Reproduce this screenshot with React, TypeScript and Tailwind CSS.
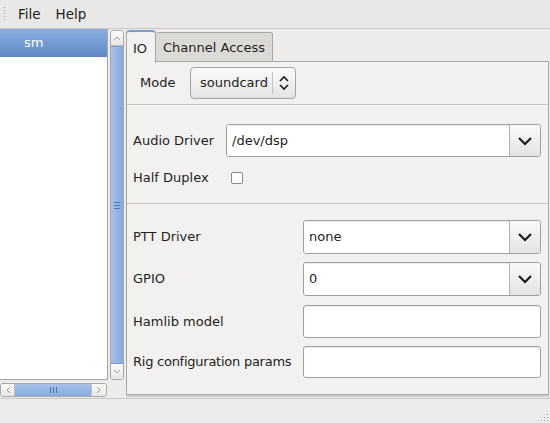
import React from "react";

function ChevronDown() {
  return (
    <svg width="16" height="10" viewBox="0 0 16 10">
      <path d="M2 2 L8 8 L14 2" fill="none" stroke="#1a1a1a" strokeWidth="2.2" />
    </svg>
  );
}

function UpDown() {
  return (
    <svg width="12" height="18" viewBox="0 0 12 18">
      <path d="M2 7 L6 3 L10 7" fill="none" stroke="#1a1a1a" strokeWidth="1.6" />
      <path d="M2 11 L6 15 L10 11" fill="none" stroke="#1a1a1a" strokeWidth="1.6" />
    </svg>
  );
}

function EntryCombo({ value, width }: { value: string; width: string }) {
  return (
    <div className={`${width} h-full flex rounded-[3px] border border-[#9f9f9f] overflow-hidden`}>
      <div className="flex-1 bg-white flex items-center pl-[5px] shadow-[inset_0_1px_1px_rgba(0,0,0,0.08)]">{value}</div>
      <div className="w-[31px] border-l border-[#b3b3b3] bg-gradient-to-b from-[#fafafa] to-[#e4e3e1] flex items-center justify-center">
        <ChevronDown />
      </div>
    </div>
  );
}

function Entry() {
  return <div className="w-[238px] h-full rounded-[3px] border border-[#9f9f9f] bg-white shadow-[inset_0_1px_1px_rgba(0,0,0,0.08)]" />;
}

export default function App() {
  return (
    <div className="w-[550px] h-[423px] bg-[#edecea] flex flex-col text-[13px] text-[#1e1e1e] font-['DejaVu_Sans',sans-serif] overflow-hidden">
      {/* menubar */}
      <div className="h-[29px] flex items-center border-b border-[#c8c6c2] bg-[#e9e8e6] shrink-0 text-[13.5px]">
        <div className="w-[4px] h-[16px] ml-[3px] bg-[radial-gradient(circle,#9a9893_0.8px,transparent_1px)] bg-[length:3px_3px]" />
        <span className="ml-[11px] mt-[1px]">File</span>
        <span className="ml-[15px] mt-[1px]">Help</span>
      </div>

      {/* main */}
      <div className="h-[369px] flex shrink-0">
        {/* left */}
        <div className="w-[125px] flex flex-col shrink-0">
          <div className="h-[351px] flex">
            <div className="w-[108px] h-full bg-white border-r border-b border-[#a4a4a4]">
              <div className="h-[28px] bg-gradient-to-b from-[#8aaee0] to-[#5e89c6] text-white flex items-center pl-[24px]">sm</div>
            </div>
            <div className="ml-[2px] mt-[1px] w-[14px] h-[350px] flex flex-col rounded-[3px] border border-[#a7a7a7] bg-[#f0efee] overflow-hidden">
              <div className="h-[15px] flex items-center justify-center border-b border-[#bdbdbd] bg-gradient-to-b from-[#fbfbfb] to-[#e8e7e6]">
                <svg width="8" height="6" viewBox="0 0 8 6"><path d="M1 5 L4 2 L7 5" fill="none" stroke="#9a9a9a" strokeWidth="1" /></svg>
              </div>
              <div className="flex-1 bg-gradient-to-r from-[#a7c3ea] to-[#86a9dc] border-y border-[#7c9fd2] flex items-center justify-center">
                <div className="flex flex-col gap-[2px]">
                  <div className="w-[6px] h-px bg-[#4f76b0]" />
                  <div className="w-[6px] h-px bg-[#4f76b0]" />
                  <div className="w-[6px] h-px bg-[#4f76b0]" />
                </div>
              </div>
              <div className="h-[15px] flex items-center justify-center bg-gradient-to-b from-[#fbfbfb] to-[#e8e7e6]">
                <svg width="8" height="6" viewBox="0 0 8 6"><path d="M1 1 L4 4 L7 1" fill="none" stroke="#9a9a9a" strokeWidth="1" /></svg>
              </div>
            </div>
          </div>
          <div className="mt-[3px] w-[107px] h-[14px] flex rounded-[3px] border border-[#a7a7a7] overflow-hidden">
            <div className="w-[14px] flex items-center justify-center border-r border-[#bdbdbd] bg-gradient-to-b from-[#fbfbfb] to-[#e8e7e6]">
              <svg width="6" height="8" viewBox="0 0 6 8"><path d="M5 1 L2 4 L5 7" fill="none" stroke="#9a9a9a" strokeWidth="1" /></svg>
            </div>
            <div className="flex-1 bg-gradient-to-b from-[#a7c3ea] to-[#86a9dc] flex items-center justify-center gap-[2px]">
              <div className="w-px h-[6px] bg-[#4f76b0]" />
              <div className="w-px h-[6px] bg-[#4f76b0]" />
              <div className="w-px h-[6px] bg-[#4f76b0]" />
            </div>
            <div className="w-[15px] flex items-center justify-center border-l border-[#bdbdbd] bg-gradient-to-b from-[#fbfbfb] to-[#e8e7e6]">
              <svg width="6" height="8" viewBox="0 0 6 8"><path d="M1 1 L4 4 L1 7" fill="none" stroke="#9a9a9a" strokeWidth="1" /></svg>
            </div>
          </div>
        </div>

        {/* notebook */}
        <div className="flex-1 flex flex-col ml-px mr-[1px]">
          <div className="h-[33px] flex items-end pt-[1px] shrink-0">
            <div className="h-[33px] w-[30px] rounded-t-[4px] border border-b-0 border-[#a6a6a6] border-t-[#7a9bd0] border-t-2 bg-[#f2f1f0] flex items-center pl-[6px] pt-[3px] relative z-10 -mb-px">
              IO
            </div>
            <div className="h-[30px] w-[117px] rounded-t-[3px] border border-[#a6a6a6] border-l-0 bg-[#dcdad6] flex items-center pl-[7px] pt-[2px]">
              Channel Access
            </div>
            <div className="flex-1 h-px bg-[#a6a6a6]" />
          </div>
          <div className="h-[333px] border-l border-r border-b border-[#a6a6a6] bg-[#f2f1f0] flex flex-col shadow-[0_2px_0_#d0cecb]">
            <div className="h-[42px] flex items-center pl-[13px] shrink-0">
              <span className="w-[50px]">Mode</span>
              <div className="w-[106px] h-[32px] rounded-[4px] border border-[#a4a4a4] bg-gradient-to-b from-[#fbfbfa] to-[#e5e4e2] flex items-center">
                <span className="pl-[9px]">soundcard</span>
                <div className="ml-[4px] w-px h-[22px] bg-[#c4c3c1]" />
                <div className="flex-1 flex justify-center"><UpDown /></div>
              </div>
            </div>
            <div className="h-px bg-[#c9c7c3] shrink-0" />
            <div className="mt-[19px] h-[33px] flex items-center shrink-0">
              <span className="pl-[6px] w-[99px]">Audio Driver</span>
              <EntryCombo value="/dev/dsp" width="w-[315px]" />
            </div>
            <div className="mt-[10px] h-[22px] flex items-center shrink-0">
              <span className="pl-[6px] w-[104px]">Half Duplex</span>
              <div className="w-[12px] h-[12px] border border-[#8a8a8a] bg-white rounded-[2px]" />
            </div>
            <div className="mt-[14px] h-px bg-[#c9c7c3] shrink-0" />
            <div className="mt-[16px] h-[34px] flex items-center shrink-0">
              <span className="pl-[6px] w-[176px]">PTT Driver</span>
              <EntryCombo value="none" width="w-[238px]" />
            </div>
            <div className="mt-[8px] h-[34px] flex items-center shrink-0">
              <span className="pl-[6px] w-[176px]">GPIO</span>
              <EntryCombo value="0" width="w-[238px]" />
            </div>
            <div className="mt-[9px] h-[33px] flex items-center shrink-0">
              <span className="pl-[6px] w-[176px]">Hamlib model</span>
              <Entry />
            </div>
            <div className="mt-[8px] h-[32px] flex items-center shrink-0">
              <span className="pl-[6px] w-[176px] whitespace-nowrap tracking-[-0.25px]">Rig configuration params</span>
              <Entry />
            </div>
          </div>
        </div>
      </div>

      {/* status bar */}
      <div className="flex-1 border-t border-[#c8c6c2] bg-[#edecea] relative">
        <div className="absolute right-[1px] bottom-[1px] w-[12px] h-[12px] bg-[radial-gradient(circle,#a9a7a3_0.8px,transparent_1px)] bg-[length:3px_3px] [clip-path:polygon(100%_0,100%_100%,0_100%)]" />
      </div>
    </div>
  );
}
